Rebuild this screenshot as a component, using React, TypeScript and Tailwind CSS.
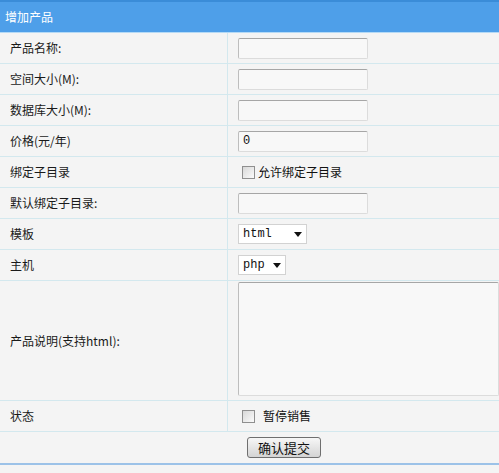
import React from "react";

const font = { fontFamily: '"Noto Sans CJK SC", "DejaVu Sans", sans-serif' };

function TextBox({ value = "" }: { value?: string }) {
  return (
    <div className="w-[130px] h-[21px] border border-t-[#a6a6a6] border-l-[#bdbdbd] border-r-[#dcdcdc] border-b-[#dcdcdc] bg-[#f8f8f8] rounded-[2px] flex items-center pl-[4px] text-[12px] text-[#111] font-['Liberation_Mono',monospace]">
      {value}
    </div>
  );
}

function Check() {
  return (
    <div className="w-[13px] h-[13px] border border-[#8f8f8f] bg-gradient-to-br from-[#d8d8d8] to-[#fbfbfb] shrink-0" />
  );
}

function Select({ value, width }: { value: string; width: string }) {
  return (
    <div
      className={`${width} h-[20px] border border-[#d2d2d2] bg-white flex items-center justify-between pl-[4px] pr-[4px] text-[12px] text-[#111] font-['Liberation_Mono',monospace]`}
    >
      <span>{value}</span>
      {/* dropdown caret */}
      <svg width="8" height="5" viewBox="0 0 8 5">
        <path d="M0 0h8L4 5z" fill="#111" />
      </svg>
    </div>
  );
}

function Row({
  label,
  children,
  h = "h-[31px]",
  top = false,
}: {
  label: string;
  children: React.ReactNode;
  h?: string;
  top?: boolean;
}) {
  return (
    <div className={`grid grid-cols-[228px_1fr] ${h} border-b border-[#d3e8ee]`}>
      <div className="border-r border-[#d3e8ee] pl-[10px] flex items-center text-[12px] text-[#1a1a1a]">
        {label}
      </div>
      <div className={`pl-[10px] flex ${top ? "items-start pt-[1px]" : "items-center"}`}>{children}</div>
    </div>
  );
}

export default function App() {
  return (
    <div className="w-[499px] h-[473px] bg-[#f4f4f4]" style={font}>
      <div className="h-[33px] border-t-2 border-t-[#3a8cd8] border-b border-b-[#b5daf6] bg-[#4e9fe9] text-white text-[12px] pl-[5px] flex items-center">
        增加产品
      </div>

      <Row label="产品名称:">
        <TextBox />
      </Row>
      <Row label="空间大小(M):">
        <TextBox />
      </Row>
      <Row label="数据库大小(M):">
        <TextBox />
      </Row>
      <Row label="价格(元/年)">
        <TextBox value="0" />
      </Row>
      <Row label="绑定子目录">
        <div className="flex items-center pl-[4px] text-[12px] text-[#111]">
          <Check />
          <span className="ml-[3px]">允许绑定子目录</span>
        </div>
      </Row>
      <Row label="默认绑定子目录:">
        <TextBox />
      </Row>
      <Row label="模板">
        <Select value="html" width="w-[69px]" />
      </Row>
      <Row label="主机">
        <Select value="php" width="w-[48px]" />
      </Row>
      <Row label="产品说明(支持html):" h="h-[120px]" top>
        <div className="w-full h-[114px] border border-t-[#a6a6a6] border-l-[#bdbdbd] border-r-[#dcdcdc] border-b-[#dcdcdc] bg-[#f8f8f8] rounded-[2px]" />
      </Row>
      <Row label="状态">
        <div className="flex items-center pl-[4px] text-[12px] text-[#111]">
          <Check />
          <span className="ml-[8px]">暂停销售</span>
        </div>
      </Row>

      <div className="h-[33px] border-b-2 border-[#9cc2e8] flex items-center pl-[247px]">
        <button className="w-[74px] h-[21px] border border-[#6f6f6f] rounded-[3px] bg-gradient-to-b from-[#f7f7f7] to-[#d4d4d4] text-[13px] text-[#111] leading-none">
          确认提交
        </button>
      </div>
    </div>
  );
}
